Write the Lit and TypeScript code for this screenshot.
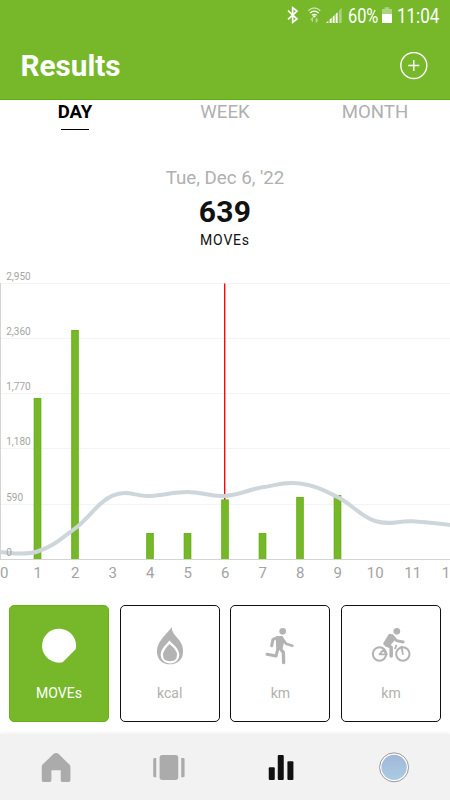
import { LitElement, html, css, svg } from "lit";
import { customElement, property } from "lit/decorators.js";

const HOUR = 37.5;
const BARS = [
  { hour: 1, top: 138 },
  { hour: 2, top: 70 },
  { hour: 4, top: 273 },
  { hour: 5, top: 273 },
  { hour: 6, top: 239.5 },
  { hour: 7, top: 273 },
  { hour: 8, top: 237 },
  { hour: 9, top: 235 },
];
const GRID = [
  { label: "2,950", y: 23.5 },
  { label: "2,360", y: 78.5 },
  { label: "1,770", y: 133.5 },
  { label: "1,180", y: 188.5 },
  { label: "590", y: 244.5 },
  { label: "0", y: 299.5 },
];
const AVERAGE = [292, 291.5, 268.5, 235.7, 235.9, 232, 235.9, 227.3, 223.5, 237, 261, 261.3, 265];

function smoothPath(values: number[]): string {
  const at = (i: number) => {
    const k = Math.max(0, Math.min(values.length - 1, i));
    return { x: k * HOUR, y: values[k] };
  };
  let d = `M0 ${values[0]}`;
  for (let i = 0; i < values.length - 1; i++) {
    const a = at(i - 1), b = at(i), c = at(i + 1), e = at(i + 2);
    d += ` C${b.x + (c.x - a.x) * 0.2} ${b.y + (c.y - a.y) * 0.2} ${c.x - (e.x - b.x) * 0.2} ${c.y - (e.y - b.y) * 0.2} ${c.x} ${c.y}`;
  }
  return d;
}

@customElement("day-chart")
export class DayChart extends LitElement {
  static styles = css`
    :host { display: block; height: 330px; }
    svg { display: block; font-family: Roboto, sans-serif; }
    .grid { stroke: #f4f4f4; }
    .axis { stroke: #d4d4d4; }
    .bar { fill: #76b82a; }
    .edge { stroke: #5eae08; stroke-opacity: 0.45; fill: none; }
    .now { stroke: #f00; stroke-width: 1.35; }
    .avg { fill: none; stroke: #cdd6db; stroke-width: 4; }
    .ylab { font-size: 10px; fill: #a5a5a5; }
    .xlab { font-size: 15px; fill: #a3a3a3; text-anchor: middle; }
  `;
  render() {
    return html`<svg width="450" height="330" viewBox="0 0 450 330">
      ${GRID.map((g) => svg`<line class=${g.label === "0" ? "axis" : "grid"} x1="0" x2="450" y1=${g.y} y2=${g.y} />`)}
      <line class="axis" x1="0.5" x2="0.5" y1="23" y2="300" />
      <line class="now" x1="224.7" x2="224.7" y1="23.5" y2="240" />
      ${BARS.map((b) => {
        const x = b.hour * HOUR;
        return svg`<rect class="bar" x=${x - 3.75} y=${b.top} width="7.5" height=${299 - b.top} />
          <path class="edge" d=${`M${x - 3.25} 299 V${b.top + 0.5} H${x + 3.25} V299`} />`;
      })}
      <path class="avg" d=${smoothPath(AVERAGE)} />
      ${GRID.map((g) => svg`<text class="ylab" x="6.2" y=${g.y - 3.5}>${g.label}</text>`)}
      ${AVERAGE.map((_, i) => svg`<text class="xlab" x=${i === 0 ? 4.2 : i * HOUR + 0.3} y="318.3">${i}</text>`)}
    </svg>`;
  }
}

const PICTURES: Record<string, unknown> = {
  moves: svg`<svg class="pic" viewBox="87 80 180 135"><path fill="#fff" d="M188 201 L227 162 A51 51 0 1 0 188 201 Z"/></svg>`,
  kcal: svg`<svg class="pic" viewBox="419.5 80 180 135">
    <path fill="#b3b3b3" d="M515 95 C514 113 529 123 539 137 C548 150 551 167 547 181 C542 197 528 207 509 207 C488 207 474 195 471 176 C468 154 478 138 490 124 C500 113 509 104 515 95 Z"/>
    <path fill="#b3b3b3" stroke="#fff" stroke-width="7" d="M508 141 C515 149 534 161 534 178 C534 193 523 201 509 201 C495 201 485 192 485 178 C485 161 501 150 508 141 Z"/></svg>`,
  run: svg`<svg class="pic" viewBox="75 80 180 135" fill="none" stroke="#b3b3b3" stroke-linecap="round" stroke-linejoin="round">
    <circle cx="173" cy="108" r="10" fill="#b3b3b3" stroke="none"/>
    <path fill="#b3b3b3" stroke-width="6" d="M155 126 L171 125 L175 136 L170 159 L157 163 Z"/>
    <path stroke-width="9" d="M158 127 L144 132 L140 151"/>
    <path stroke-width="8" d="M171 128 L183 145 L202 151"/>
    <path stroke-width="10" d="M164 158 L175 171 L176 202"/>
    <path stroke-width="9" d="M160 156 L153 182 L126 177"/></svg>`,
  bike: svg`<svg class="pic" viewBox="407.5 80 180 135" fill="none" stroke="#b3b3b3" stroke-linecap="round" stroke-linejoin="round">
    <circle cx="515" cy="108" r="10" fill="#b3b3b3" stroke="none"/>
    <circle cx="463" cy="176" r="20" stroke-width="6"/>
    <circle cx="533" cy="176" r="20" stroke-width="6"/>
    <path stroke-width="5.5" d="M463 177 L476 162 M463 177 H485 L474 164 M533 176 L529 154 M513 151 L510 159"/>
    <path fill="#b3b3b3" stroke-width="8" d="M494 119 L503 123 L506 132 L494 146 L484 151 L478 145 Z"/>
    <path stroke-width="8.5" d="M501 121 L514 136 L534 140"/>
    <path stroke-width="10.5" d="M484 148 L498 156 L498 182"/></svg>`,
};

@customElement("metric-card")
export class MetricCard extends LitElement {
  @property() picture = "moves";
  @property() label = "";
  static styles = css`
    :host {
      display: flex; flex-direction: column; align-items: center; box-sizing: border-box;
      height: 117px; padding-top: 15.7px; border: 1px solid #111; border-radius: 5px;
      background: #fff; color: #b0b0b0; font: 14px/18px Roboto, sans-serif;
    }
    :host([active]) { background: #76b82a; border-color: #68b214; color: #fff; }
    .pic { display: block; width: 60px; height: 45px; }
    .label { margin-top: 17px; font-size: 14px; }
  `;
  render() {
    return html`${PICTURES[this.picture]}<span class="label">${this.label}</span>`;
  }
}

@customElement("app-root")
export class AppRoot extends LitElement {
  static styles = css`
    :host {
      display: flex; flex-direction: column; width: 450px; height: 800px; overflow: hidden;
      background: #fff; font-family: Roboto, sans-serif; color: #111;
    }
    svg { display: block; }
    .top { box-sizing: border-box; height: 100px; background: #76b82a; border-bottom: 1px solid #5eae10; color: #fff; }
    .status { display: flex; justify-content: flex-end; height: 32px; }
    .title-row { display: flex; align-items: center; justify-content: space-between; height: 67px; padding: 0 22px 0 20.5px; }
    h1 { margin: 0; font-size: 29.7px; line-height: 36px; font-weight: 700; }
    .tabs { display: grid; grid-template-columns: repeat(3, 1fr); height: 66px; }
    .tab { display: flex; flex-direction: column; align-items: center; font-size: 18.6px; line-height: 24px; color: #b0b0b0; }
    .tab.on { color: #000; font-weight: 700; }
    .tab.on::after { content: ""; width: 28px; height: 1px; margin-top: 5px; background: #000; }
    .summary { display: flex; flex-direction: column; align-items: center; height: 94px; }
    .date { font-size: 18.7px; line-height: 24px; color: #b0b0b0; }
    .total { font-size: 30px; line-height: 36px; font-weight: 700; margin-top: 4px; letter-spacing: 0.3px; }
    .unit { font-size: 14px; line-height: 18px; margin-top: 1px; letter-spacing: 0.8px; }
    .cards { display: grid; grid-template-columns: repeat(4, 1fr); gap: 10.6px; padding: 15px 9px 0; height: 144px; box-sizing: border-box; }
    .nav { flex: 1; display: grid; grid-template-columns: repeat(4, 1fr); place-items: center; background: #f2f2f2; box-shadow: 0 -1px 3px #00000010; }
  `;
  render() {
    return html`
      <header class="top">
        <div class="status">
          <svg width="180" height="32" viewBox="0 0 540 96" fill="#fff" font-family="Roboto, sans-serif">
            <path d="M54 32 L81 57 L68 67 V23 L81 33 L54 58" fill="none" stroke="#fff" stroke-width="5"/>
            <g fill="none" stroke="#fff" stroke-width="4">
              <path d="M115 32 Q133 16 151 32" opacity=".6"/>
              <path d="M120 39 Q133 28 146 39"/>
              <path d="M126 46 Q133 40 140 46"/>
              <path d="M127 65 V54 L122 60 M139 54 V65 L144 59" opacity=".5" stroke-width="3.5"/>
            </g>
            <circle cx="133" cy="49" r="3.5"/>
            <path d="M168 69 L175 62 V69 Z M179 58 L185 53 V69 H179 Z M188 50 L194 45 V69 H188 Z M197 42 L203 37 V69 H197 Z"/>
            <path d="M207 32 L215 23 V69 H207 Z" opacity=".4"/>
            <text x="234" y="68" font-size="59" textLength="91" lengthAdjust="spacingAndGlyphs">60%</text>
            <path d="M336 27 H344 V22 H358 V27 H366 V42 H336 Z" opacity=".4"/>
            <rect x="336" y="42" width="30" height="27"/>
            <text x="381" y="68" font-size="59" textLength="127" lengthAdjust="spacingAndGlyphs">11:04</text>
          </svg>
        </div>
        <div class="title-row">
          <h1>Results</h1>
          <svg width="28" height="28" viewBox="0 0 28 28" fill="none" stroke="#fff">
            <circle cx="13.8" cy="13.5" r="13" stroke-width="1.4"/>
            <path d="M13.8 8 V19 M8.3 13.5 H19.3" stroke-width="1.4"/>
          </svg>
        </div>
      </header>
      <nav class="tabs">
        <div class="tab on">DAY</div>
        <div class="tab">WEEK</div>
        <div class="tab">MONTH</div>
      </nav>
      <section class="summary">
        <div class="date">Tue, Dec 6, '22</div>
        <div class="total">639</div>
        <div class="unit">MOVEs</div>
      </section>
      <day-chart></day-chart>
      <section class="cards">
        <metric-card active picture="moves" label="MOVEs"></metric-card>
        <metric-card picture="kcal" label="kcal"></metric-card>
        <metric-card picture="run" label="km"></metric-card>
        <metric-card picture="bike" label="km"></metric-card>
      </section>
      <footer class="nav">
        <svg width="40" height="40" viewBox="108.75 66 120 120" fill="#ababab">
          <path d="M126 125 Q126 121 129 118 L161 87 Q169 81 177 87 L208 118 Q212 121 212 125 V166 Q212 171 207 171 H188 Q183 171 183 166 V136 H155 V166 Q155 171 150 171 H131 Q126 171 126 166 Z"/>
        </svg>
        <svg width="40" height="40" viewBox="446.25 66 120 120" fill="#ababab">
          <rect x="478" y="90" width="56" height="75" rx="8"/>
          <path d="M459 103 Q459 99 463 99 H468 V157 H463 Q459 157 459 153 Z M543 99 H549 Q553 99 553 103 V153 Q553 157 549 157 H543 Z"/>
        </svg>
        <svg width="40" height="40" viewBox="108.75 66 120 120" fill="#111">
          <rect x="132" y="127" width="18" height="38" rx="3"/>
          <rect x="159" y="90" width="18" height="75" rx="3"/>
          <rect x="188" y="109" width="18" height="56" rx="3"/>
        </svg>
        <svg width="40" height="40" viewBox="446.25 66 120 120">
          <defs><linearGradient id="sky" x1="0" y1="0" x2="0" y2="1">
            <stop offset="0" stop-color="#a2b7d6"/><stop offset="1" stop-color="#a9cce5"/>
          </linearGradient></defs>
          <circle cx="506.5" cy="127" r="43.5" fill="#fff" stroke="#999" stroke-width="3"/>
          <circle cx="506.5" cy="127" r="38" fill="url(#sky)"/>
        </svg>
      </footer>`;
  }
}
